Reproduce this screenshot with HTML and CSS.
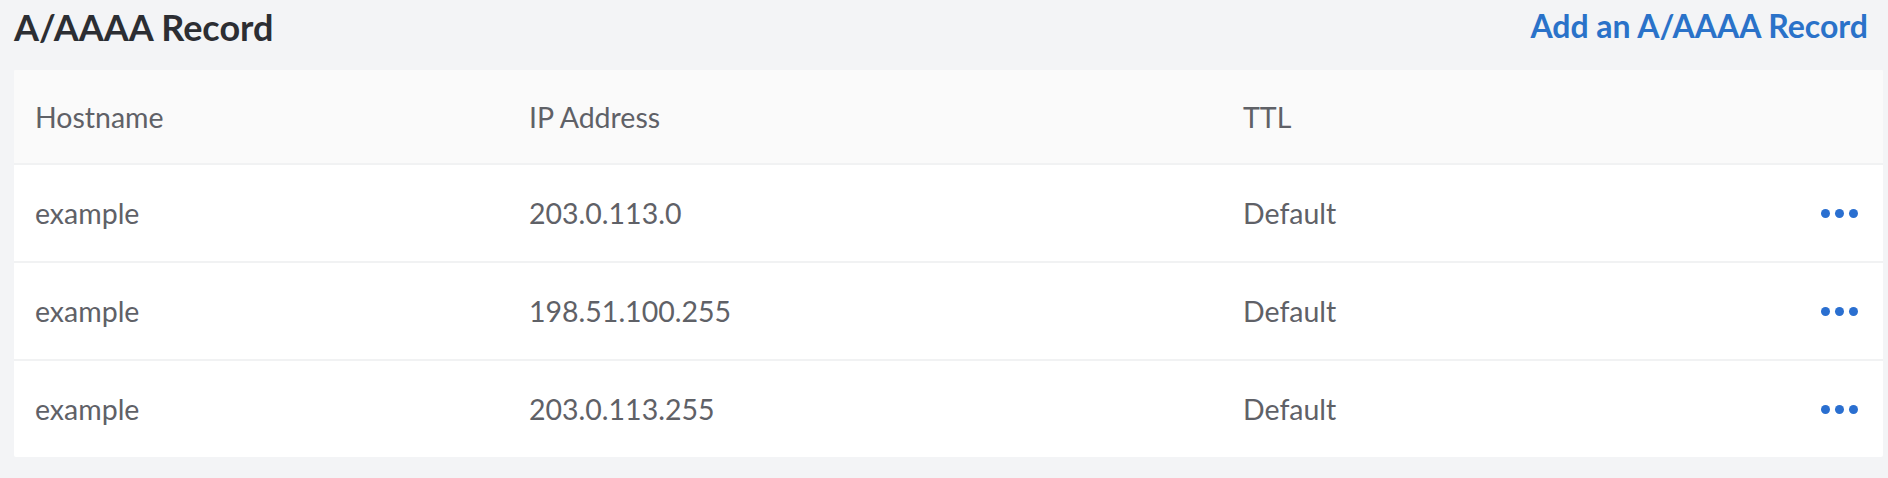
FILE: index.html
```html
<!DOCTYPE html>
<html lang="en">
<head>
    <meta charset="UTF-8">
    <meta name="viewport" content="width=device-width, initial-scale=1.0">
    <title>A/AAAA Record</title>
    <link rel="stylesheet" href="styles.css">
</head>
<body>
    <div class="section">
        <div class="section-header">
            <h2>A/AAAA Record</h2>
            <a href="#" class="add-link">Add an A/AAAA Record</a>
        </div>

        <div class="records">
            <div class="record-row head">
                <div class="cell">Hostname</div>
                <div class="cell">IP Address</div>
                <div class="cell">TTL</div>
                <div class="cell"></div>
            </div>
            <div class="record-row">
                <div class="cell">example</div>
                <div class="cell">203.0.113.0</div>
                <div class="cell">Default</div>
                <div class="cell actions">
                    <svg width="37" height="9" viewBox="0 0 37 9"><circle cx="4.5" cy="4.5" r="4.5"/><circle cx="18.5" cy="4.5" r="4.5"/><circle cx="32.5" cy="4.5" r="4.5"/></svg>
                </div>
            </div>
            <div class="record-row">
                <div class="cell">example</div>
                <div class="cell">198.51.100.255</div>
                <div class="cell">Default</div>
                <div class="cell actions">
                    <svg width="37" height="9" viewBox="0 0 37 9"><circle cx="4.5" cy="4.5" r="4.5"/><circle cx="18.5" cy="4.5" r="4.5"/><circle cx="32.5" cy="4.5" r="4.5"/></svg>
                </div>
            </div>
            <div class="record-row">
                <div class="cell">example</div>
                <div class="cell">203.0.113.255</div>
                <div class="cell">Default</div>
                <div class="cell actions">
                    <svg width="37" height="9" viewBox="0 0 37 9"><circle cx="4.5" cy="4.5" r="4.5"/><circle cx="18.5" cy="4.5" r="4.5"/><circle cx="32.5" cy="4.5" r="4.5"/></svg>
                </div>
            </div>
        </div>
    </div>
</body>
</html>
```

FILE: styles.css
```css
body {
    margin: 0;
    padding: 0 5px 0 14px;
    background-color: #f3f4f6;
    font-family: Lato, "Liberation Sans", sans-serif;
}
.section-header {
    display: flex;
    justify-content: space-between;
    align-items: flex-start;
    height: 70px;
    padding-right: 15px;
}
.section-header h2 {
    margin: 0;
    padding-top: 4px;
    font-size: 36px;
    line-height: 46px;
    font-weight: 700;
    color: #2c2e33;
}
.add-link {
    padding-top: 3px;
    font-size: 32px;
    line-height: 46px;
    font-weight: 700;
    color: #2a72c9;
    text-decoration: none;
}
.records {
    background: #fff;
    border-radius: 2px;
    overflow: hidden;
}
.record-row {
    display: grid;
    grid-template-columns: 494px 714px 1fr 100px;
    height: 96px;
    border-bottom: 2px solid #f1f2f3;
}
.record-row:last-child {
    border-bottom: none;
}
.record-row.head {
    height: 93px;
    background-color: #fafafa;
}
.cell {
    display: flex;
    align-items: center;
    padding-left: 21px;
    font-size: 28.5px;
    color: #5f6167;
}
.actions {
    justify-content: flex-end;
    padding-right: 25px;
}
.actions svg {
    fill: #2a6fd0;
}
```
